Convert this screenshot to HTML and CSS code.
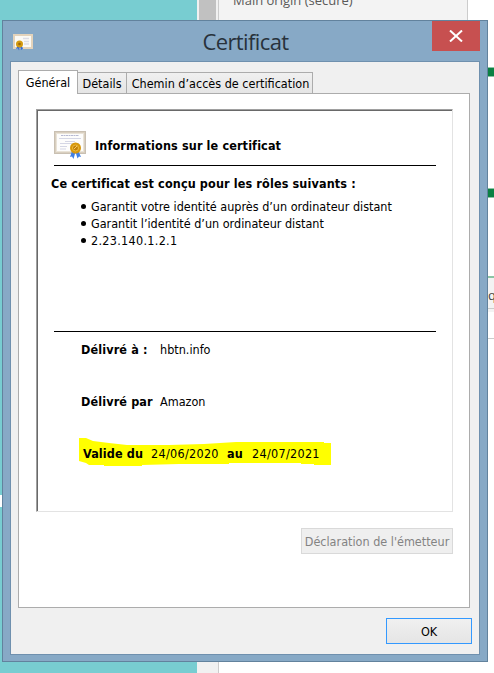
FILE: index.html
```html
<!DOCTYPE html>
<html lang="fr">
<head>
<meta charset="utf-8">
<title>Certificat</title>
<link rel="stylesheet" href="styles.css">
</head>
<body>
<div class="backdrop">
  <div class="page-pane"><i class="notch"></i></div>
  <div class="scroll-pane"><i class="thumb"></i></div>
  <div class="tools-pane">
    <div class="origin">Main origin (secure)</div>
    <div class="side">
      <i class="bar"></i>
      <i class="bar second"></i>
      <div class="cell">q</div>
      <i class="rule"></i>
    </div>
  </div>
</div>

<main class="window">
  <header class="titlebar">
    <svg class="app-icon" width="20" height="17" viewBox="0 0 20 17">
      <rect width="20" height="15" fill="#e3d3bb"/><rect x="2" y="2" width="16" height="11" fill="#fbfaf5"/>
      <path d="M10 4.500h6M11 7.500h5M11 10h5" stroke="#dddde6" stroke-width="1.500"/>
      <path d="M5 11l-2 4 2-.5 1 2 1-4 1 3.500 2-1.500-2-4z" fill="#2e6ad8"/>
      <circle cx="6.500" cy="10" r="3.500" fill="#d39a10"/><circle cx="6.500" cy="10" r="1.300" fill="#98660a"/>
    </svg>
    <h1>Certificat</h1>
    <div class="close"><svg width="14" height="12" viewBox="0 0 14 12"><path d="M1 .5L13 11.500M13 .5L1 11.500" stroke="#fff" stroke-width="2"/></svg></div>
  </header>
  <section class="client">
    <nav class="tabs">
      <div class="tab active"><span>Général</span></div>
      <div class="tab details"><span>Détails</span></div>
      <div class="tab path"><span>Chemin d’accès de certification</span></div>
    </nav>
    <div class="sheet">
      <div class="certificate">
        <div class="heading">
          <svg width="32" height="29" viewBox="0 0 32 29">
            <rect x=".5" y=".5" width="31" height="22" fill="#d9cfbf" stroke="#c9c0b2"/>
            <rect x="2.500" y="2.500" width="27" height="18" fill="#fdfdfc" stroke="#e9e3d8"/>
            <path d="M7 4.500h18" stroke="#b7bad2" stroke-dasharray="2 .5"/>
            <path d="M5 7.500h22M11 10.500h10M6 12.500h19M6 15.500h7M6 18h6" stroke="#d5d7e5"/>
            <path d="M18 20l-2 6 2-.5 1.500 2.500 2-7 2 6.500 1.500-2 2 .5-3-7z" fill="#3f80e6"/>
            <circle cx="21.500" cy="17" r="5.500" fill="#d7980c"/>
            <circle cx="21.500" cy="17" r="3" fill="#c28009" stroke="#edbc42"/>
            <path d="M20 18l3-3" stroke="#f6cf66"/>
          </svg>
          <b>Informations sur le certificat</b>
        </div>
        <hr>
        <h2>Ce certificat est conçu pour les rôles suivants :</h2>
        <ul>
          <li><span>Garantit votre identité auprès d’un ordinateur distant</span></li>
          <li><span>Garantit l’identité d’un ordinateur distant</span></li>
          <li><span class="digits">2.23.140.1.2.1</span></li>
        </ul>
        <hr>
        <div class="party"><b>Délivré à :</b><span>hbtn.info</span></div>
        <div class="party"><b>Délivré par</b><span>Amazon</span></div>
        <div class="validity">
          <svg class="marker" width="252" height="28" viewBox="0 0 252 28"><path d="M0 0h7l7 3 16 2 18 2h42l35-1 32-2h88v1h7v22h-17v-1h-13v-1h-72v1h-50l-37 1v1h-17v1H43v-1H25v-1H10l-3-2-7-2z" fill="#ff0"/></svg>
          <b>Valide du</b><span class="digits">24/06/2020</span><b>au</b><span class="digits">24/07/2021</span>
        </div>
      </div>
      <div class="statement"><span>Déclaration de l'émetteur</span></div>
    </div>
    <div class="ok"><span>OK</span></div>
  </section>
</main>
</body>
</html>
```
FILE: styles.css
```css
* { box-sizing: border-box; }
body { margin: 0; width: 494px; height: 673px; overflow: hidden; position: relative; background: #fff;
  font: 12.5px/17px "DejaVu Sans Condensed", "DejaVu Sans", sans-serif; color: #000; }
svg { display: block; }
span, b { white-space: nowrap; }
b, h2 { letter-spacing: .13px; }
i { display: block; }

.backdrop { display: grid; grid-template-columns: 197px 21px 276px; height: 673px; }
.page-pane { background: #78cdd1; padding-top: 495px; }
.notch { width: 2px; height: 12px; background: #fff; }
.scroll-pane { background: #f1f1f1; padding: 0 2px; }
.thumb { height: 300px; background: #c1c1c1; }
.tools-pane { border-left: 1px solid #ccc; }
.origin { width: 249px; height: 20px; background: #f3f3f3; border-right: 1px solid #ccc; padding-left: 14px;
  font: 13px/0 "Open Sans", sans-serif; color: #5a5a5a; }
.side { width: 6px; margin-left: 269px; padding-top: 47px; }
.bar { height: 10px; background: #0b8043; border: solid #8cc5a5; border-width: 1px 0; }
.second { margin-top: 111px; }
.cell { height: 33px; margin-top: 78px; border-top: 2px solid #8cc5a5; border-bottom: 1px solid #ccc; background: #f3f3f3;
  font: 13px/34px "Open Sans", sans-serif; color: #444; overflow: hidden; }
.rule { height: 30px; border-top: 3px solid #f3f3f3; border-bottom: 1px solid #ccc; }

.window { position: absolute; left: 2px; top: 20px; width: 486px; height: 642px; padding: 0 7px 7px;
  border: 1px solid #62829d; background: #87a9c6; }
.titlebar { display: flex; height: 40px; }
.app-icon { margin: 13px 0 0 3px; }
h1 { margin: 0; flex: 1; text-align: center; padding: 3px 0 0 26px; font: 22px/35px "Open Sans", sans-serif; color: #28323b; letter-spacing: -.6px; }
.close { width: 48px; height: 30px; background: #c75050; display: grid; place-items: center; }
.client { height: 594px; border: 1px solid #6f90ae; background: #f0f0f0; padding: 8px 9px 9px 7px; display: flex; flex-direction: column; }
.tabs { display: flex; align-items: flex-end; height: 23px; flex: none; position: relative; z-index: 1; }
.tab { height: 21px; border: 1px solid #acacac; border-bottom: 0; border-left: 0; background: linear-gradient(#f0f0f0, #e5e5e5);
  display: flex; justify-content: center; align-items: center; padding-top: 1px; }
.active { width: 60px; height: 24px; border-left: 1px solid #acacac; background: #fff; margin-bottom: -1px; padding: 0 0 1px; }
.details { width: 49px; }
.path { width: 186px; padding-left: 2px; }
.sheet { height: 515px; flex: none; border: 1px solid #acacac; background: #fff; padding: 15px 16px 0 17px; display: flex; flex-direction: column; align-items: flex-end; }
.certificate { width: 417px; height: 403px; flex: none; border: 1px solid; border-color: #a0a0a0 #e3e3e3 #e3e3e3 #a0a0a0;
  box-shadow: inset 1px 1px #696969; padding: 20px 16px 0 17px; }
.heading { display: flex; align-items: center; height: 33px; gap: 9px; padding-bottom: 2px; }
.heading b { padding-bottom: 1px; }
hr { height: 1px; border: 0; background: #000; margin: 2px 0 9px; }
h2 { margin: 0 0 6px -3px; font-size: 12.5px; line-height: 17px; }
ul { list-style: none; margin: 0 0 82px; padding: 0 0 0 27px; }
li { display: flex; align-items: center; gap: 5px; height: 17px; }
li::before { content: ""; width: 5px; height: 5px; border-radius: 50%; background: #000; }
.digits { letter-spacing: .3px; }
.party { display: grid; grid-template-columns: 79px 1fr; padding-left: 27px; margin-bottom: 35px; }
.validity { position: relative; display: grid; grid-template-columns: 68px 76px 25px 80px; padding-left: 29px; }
.validity > * { position: relative; }
.validity .marker { position: absolute; left: 25px; top: -7px; }
.statement { width: 152px; height: 26px; margin-top: 16px; border: 1px solid #d9d9d9; background: #efefef; color: #838383; display: grid; place-items: center; }
.ok { width: 86px; height: 26px; margin: 10px -2px 0 0; align-self: flex-end; border: 1px solid #39f; background: linear-gradient(#f0f0f0, #e5e5e5); display: grid; place-items: center; }
```
